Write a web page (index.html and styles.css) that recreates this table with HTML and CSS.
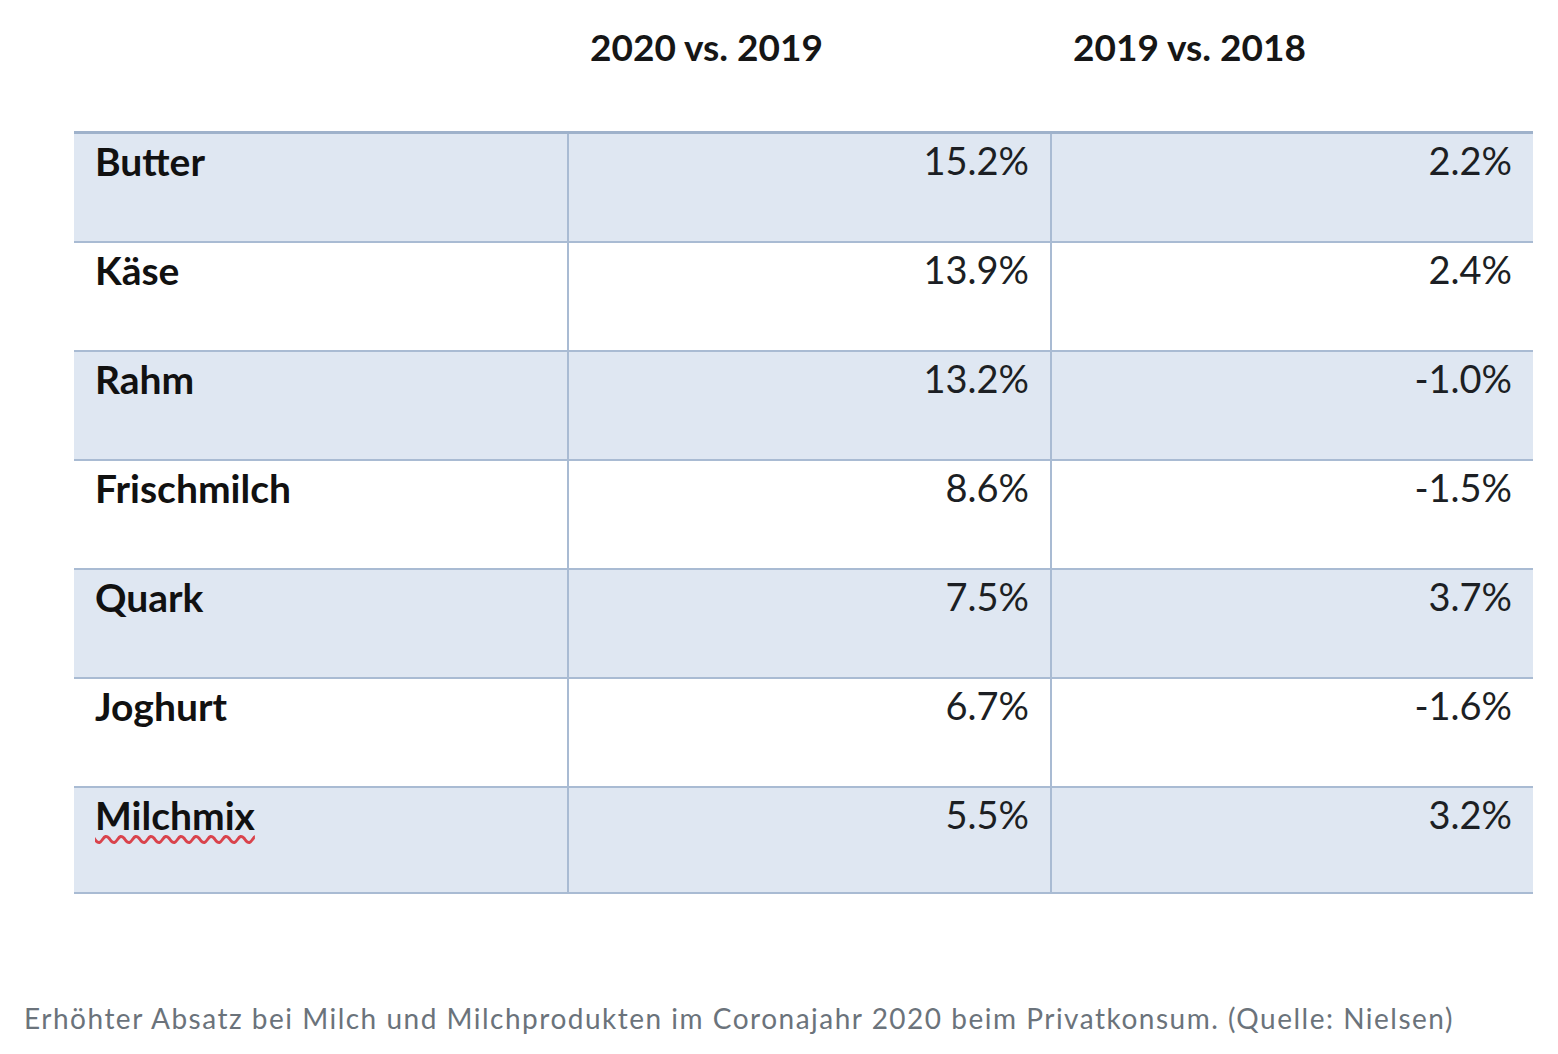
FILE: index.html
```html
<!DOCTYPE html>
<html lang="de">
<head>
<meta charset="utf-8">
<title>Absatz Milchprodukte</title>
<link rel="stylesheet" href="styles.css">
</head>
<body>
<figure class="figure">
  <div class="chart">
    <div class="head">
      <div class="hcell"></div>
      <div class="hcell">2020 vs. 2019</div>
      <div class="hcell">2019 vs. 2018</div>
    </div>
    <div class="table">
      <div class="row shaded"><div class="cell name">Butter</div><div class="cell num">15.2%</div><div class="cell num">2.2%</div></div>
      <div class="row"><div class="cell name">Käse</div><div class="cell num">13.9%</div><div class="cell num">2.4%</div></div>
      <div class="row shaded"><div class="cell name">Rahm</div><div class="cell num">13.2%</div><div class="cell num">-1.0%</div></div>
      <div class="row"><div class="cell name">Frischmilch</div><div class="cell num">8.6%</div><div class="cell num">-1.5%</div></div>
      <div class="row shaded"><div class="cell name">Quark</div><div class="cell num">7.5%</div><div class="cell num">3.7%</div></div>
      <div class="row"><div class="cell name">Joghurt</div><div class="cell num">6.7%</div><div class="cell num">-1.6%</div></div>
      <div class="row shaded last"><div class="cell name"><span class="spell">Milchmix</span></div><div class="cell num">5.5%</div><div class="cell num">3.2%</div></div>
    </div>
  </div>
  <figcaption class="caption">Erhöhter Absatz bei Milch und Milchprodukten im Coronajahr 2020 beim Privatkonsum. (Quelle: Nielsen)</figcaption>
</figure>
</body>
</html>
```

FILE: styles.css
```css
html, body {
  margin: 0;
  padding: 0;
  background: #ffffff;
}
.figure {
  margin: 0;
  width: 1558px;
  height: 1054px;
  display: flex;
  flex-direction: column;
}
.chart {
  padding-left: 74px;
  width: 1459px;
  font-family: Lato, "Liberation Sans", sans-serif;
  color: #111111;
}
.head {
  display: grid;
  grid-template-columns: 493px 483px 483px;
  height: 131px;
}
.hcell {
  padding: 25px 0 0 23px;
  font-size: 37px;
  font-weight: 700;
  line-height: 1.2;
  color: #161616;
}
.table {
  display: flex;
  flex-direction: column;
  border-top: 3px solid #9fb2cb;
}
.row {
  display: grid;
  grid-template-columns: 493px 483px 483px;
  height: 107px;
  border-bottom: 2px solid #a9bbd3;
  background: #ffffff;
}
.row.shaded {
  background: #dfe7f2;
}
.row.last {
  height: 104px;
}
.cell {
  padding: 4px 21px 0 21px;
  font-size: 39px;
  line-height: 1.2;
}
.cell + .cell {
  border-left: 2px solid #a9bbd3;
}
.name {
  font-weight: 700;
  color: #111111;
}
.num {
  text-align: right;
  font-weight: 400;
  font-size: 38px;
  color: #1c1f24;
}
.spell {
  text-decoration: underline wavy #d9434c;
  text-decoration-thickness: 3px;
  text-underline-offset: 5px;
}
.caption {
  margin-top: 108px;
  padding-left: 24px;
  font-family: Lato, "Liberation Sans", sans-serif;
  font-size: 28px;
  letter-spacing: 1.5px;
  color: #6b737b;
  line-height: 1.2;
}
```
